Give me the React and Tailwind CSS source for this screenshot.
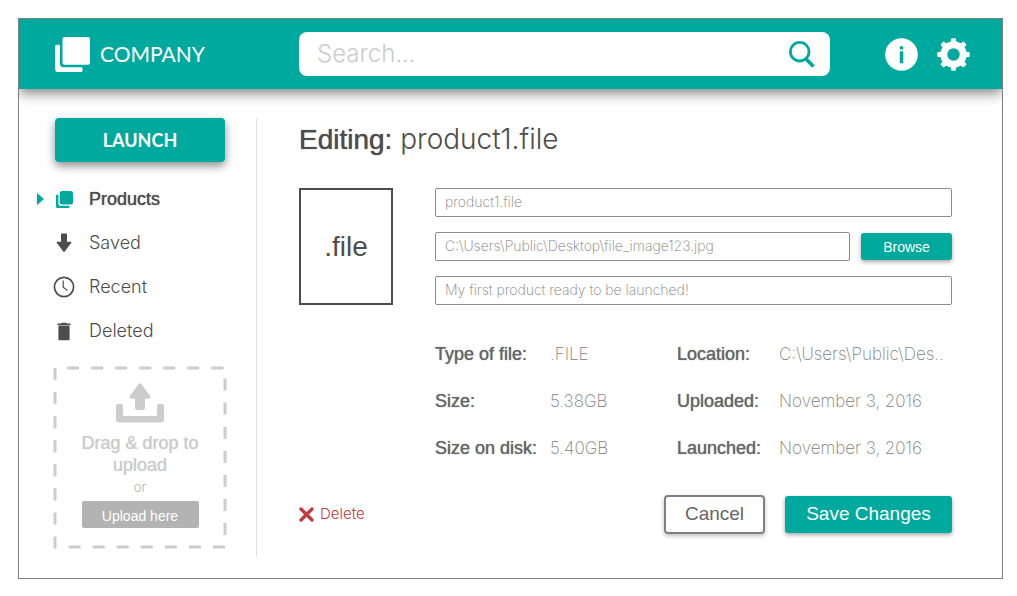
import React from "react";

const sans = "font-['Liberation_Sans',Arial,sans-serif]";
const light = "font-['Inter','Liberation_Sans',sans-serif] font-light";
const thin = "font-['Inter','Liberation_Sans',sans-serif] font-extralight";
const heavy = "[text-shadow:0_0_1px_currentColor]";

function StackIcon({ className, radius = 2 }) {
  return (
    <svg viewBox="0 0 34 34" className={className} fill="currentColor" aria-hidden="true">
      <rect x="7.300" y="0" width="26.700" height="27" rx={radius} />
      <path d="M1.500 7.500H3.500Q4.800 7.500 4.800 8.800V25.500Q4.800 29.300 8.500 29.300H25.500Q26.800 29.300 26.800 30.600V32.300Q26.800 34 25.300 34H3Q0 34 0 31V9Q0 7.500 1.500 7.500Z" />
    </svg>
  );
}

function SearchIcon() {
  return (
    <svg viewBox="0 0 26 27" className="h-[27px] w-[26px]" fill="none" stroke="currentColor" aria-hidden="true">
      <circle cx="10.7" cy="10.7" r="9.300" strokeWidth="2.800" />
      <path d="M16.800 17.800L24.500 25.500" strokeWidth="3.600" />
    </svg>
  );
}

function InfoIcon() {
  return (
    <svg viewBox="0 0 33 33" className="size-[33px]" aria-hidden="true">
      <circle cx="16.500" cy="16.500" r="16.300" fill="#fff" />
      <circle cx="16.500" cy="9.800" r="1.900" fill="#00a99d" />
      <rect x="14.800" y="13.300" width="3.500" height="12" fill="#00a99d" />
    </svg>
  );
}

function GearIcon() {
  return (
    <svg viewBox="0 0 33 33" className="size-[33px]" aria-hidden="true">
      <g fill="#fff">
        <circle cx="16.500" cy="16.500" r="13.200" />
        {[0, 45, 90, 135, 180, 225, 270, 315].map((a) => (
          <path key={a} d="M13 5L14 3.200V1.200Q14 .3 15 .3H18Q19 .3 19 1.200V3.200L20 5Z" transform={`rotate(${a} 16.5 16.5)`} />
        ))}
      </g>
      <circle cx="16.500" cy="16.500" r="6.200" fill="#00a99d" />
    </svg>
  );
}

function DownIcon() {
  return (
    <svg viewBox="0 0 16 20" className="h-5 w-4" fill="currentColor" aria-hidden="true">
      <path d="M5 1Q5 .5 5.500 .5H10.500Q11 .5 11 1V8.700H14.800Q15.900 8.900 15.300 9.800L9 18.300Q8 19.500 7 18.300L.7 9.800Q.1 8.900 1.200 8.700H5Z" />
    </svg>
  );
}

function ClockIcon() {
  return (
    <svg viewBox="0 0 22 22" className="size-[22px]" fill="none" stroke="currentColor" aria-hidden="true">
      <circle cx="11" cy="11" r="9.600" strokeWidth="1.700" />
      <path d="M10.200 4.500V11.200L14.600 14.600" strokeWidth="1.200" />
    </svg>
  );
}

function TrashIcon() {
  return (
    <svg viewBox="0 0 14 19" className="h-[19px] w-3.5" fill="currentColor" aria-hidden="true">
      <path d="M.5 1.600H4.200L4.800 .8H9.200L9.800 1.600H13.500V3H.5Z" />
      <path d="M1.400 3.500H12.600V17Q12.600 18.300 11.300 18.300H2.700Q1.400 18.300 1.400 17Z" />
    </svg>
  );
}

function UploadIcon() {
  return (
    <svg viewBox="0 0 48 40" className="h-10 w-12" fill="#ccc" aria-hidden="true">
      <path d="M22.600 1Q24 -.4 25.400 1L34 12.800Q35 15.300 32.800 15.700H29V25Q29 27 27 27H21Q19 27 19 25V15.700H15.200Q13 15.300 14 12.800Z" />
      <path d="M2 21H5.500Q7 21 7 22.500V33H41V22.500Q41 21 42.500 21H46Q48 21 48 23V36.500Q48 39.500 45 39.500H3Q0 39.500 0 36.500V23Q0 21 2 21Z" />
    </svg>
  );
}

const nav = [
  { label: "Products", icon: <StackIcon radius={5} className="size-[17px] text-[#00a99d]" />, active: true },
  { label: "Saved", icon: <DownIcon /> },
  { label: "Recent", icon: <ClockIcon /> },
  { label: "Deleted", icon: <TrashIcon /> },
];

const details = [
  ["Type of file:", ".FILE", "Location:", "C:\\Users\\Public\\Des.."],
  ["Size:", "5.38GB", "Uploaded:", "November 3, 2016"],
  ["Size on disk:", "5.40GB", "Launched:", "November 3, 2016"],
];

const field = `${thin} h-[29px] w-full min-w-0 rounded-xs border border-[#8c8c8c] bg-white px-[9px] pb-0.5 text-sm text-[#808080] outline-none`;

function Header() {
  return (
    <header className="flex h-[70px] items-center bg-[#00a99d] pl-9 pr-8 text-white shadow-[0_4px_12px_rgba(0,0,0,0.5)]">
      <a href="#" className="flex w-[244px] shrink-0 items-center gap-2.5">
        <StackIcon className="size-[35px]" />
        <span className="font-['Lato',sans-serif] text-[21px]">COMPANY</span>
      </a>
      <form className="flex h-11 min-w-0 flex-1 items-center rounded-lg bg-white pl-[18px] pr-[15px]">
        <input
          type="search"
          aria-label="Search"
          placeholder="Search..."
          className={`${light} min-w-0 flex-1 bg-transparent text-2xl text-[#4d4d4d] outline-none placeholder:text-[#ccc]`}
        />
        <button type="button" aria-label="Search" className="text-[#00a99d]"><SearchIcon /></button>
      </form>
      <div className="ml-[55px] flex gap-[19px]">
        <button type="button" aria-label="Information"><InfoIcon /></button>
        <button type="button" aria-label="Settings"><GearIcon /></button>
      </div>
    </header>
  );
}

function Sidebar() {
  return (
    <aside className="w-[202px] shrink-0 border-r border-[#e0e0e0] pr-[31px] pb-2.5">
      <button type="button" className="h-11 w-full rounded bg-[#00a99d] font-['Lato',sans-serif] text-lg font-bold text-white shadow-[0_4px_10px_rgba(0,0,0,0.45)]">
        LAUNCH
      </button>
      <nav className="mt-[15px] -ml-[18px]">
        {nav.map((n) => (
          <a key={n.label} href="#" className="flex h-11 items-center text-lg text-[#4d4d4d]">
            <span className="w-4">
              {n.active && (
                <svg viewBox="0 0 7 12" className="h-3 w-[7px] text-[#00a99d] drop-shadow-sm" fill="currentColor" aria-hidden="true">
                  <path d="M0 0L7 6L0 12Z" />
                </svg>
              )}
            </span>
            <span className="flex w-[22px] justify-center">{n.icon}</span>
            <span className={n.active ? `ml-3.5 ${heavy}` : `ml-3.5 ${light}`}>{n.label}</span>
          </a>
        ))}
      </nav>
      <div className="relative mt-[15px] flex h-[179px] flex-col items-center pt-[15px] text-[#ccc]">
        <svg className="pointer-events-none absolute inset-0 size-full overflow-visible" aria-hidden="true">
          <rect width="100%" height="100%" fill="none" stroke="#ccc" strokeWidth="3" pathLength="696" strokeDasharray="12 12" strokeDashoffset="12" />
        </svg>
        <UploadIcon />
        <p className={`mt-[9px] w-[130px] text-center text-lg leading-[22px] ${heavy}`}>Drag &amp; drop to upload</p>
        <p className={`${light} text-[13px] leading-[22px] text-[#b3b3b3]`}>or</p>
        <button type="button" className="mt-[3px] h-[27px] w-[117px] rounded-xs bg-[#b3b3b3] pt-0.5 text-sm text-white">Upload here</button>
      </div>
    </aside>
  );
}

function Editor() {
  return (
    <main className="min-w-0 flex-1 pl-[42px]">
      <h1 className="text-[28px] leading-[42px] text-[#4d4d4d]">
        <span className={heavy}>Editing:</span> <span className={light}>product1.file</span>
      </h1>
      <form className="mt-[27px]">
        <div className="flex gap-[42px]">
          <div className="flex w-[94px] shrink-0 items-center justify-center border-2 border-[#4d4d4d] text-[28px] text-[#4d4d4d]">.file</div>
          <div className="flex min-w-0 flex-1 flex-col gap-[15px]">
            <input aria-label="File name" defaultValue="product1.file" className={field} />
            <div className="flex items-center gap-[11px]">
              <input aria-label="Image path" defaultValue={"C:\\Users\\Public\\Desktop\\file_image123.jpg"} className={field} />
              <button type="button" className="h-[27px] w-[91px] shrink-0 rounded-[3px] bg-[#00a99d] text-sm text-white shadow-[0_2px_4px_rgba(0,0,0,0.35)]">Browse</button>
            </div>
            <input aria-label="Description" defaultValue="My first product ready to be launched!" className={field} />
          </div>
        </div>
        <dl className="mt-[26px] ml-[136px] grid grid-cols-[115px_1fr_102px_173px] text-lg leading-[47px] whitespace-nowrap">
          {details.map((row) =>
            row.map((t, i) =>
              i % 2 ? (
                <dd key={row[0] + i} className={`${thin} text-[17px] text-[#808080]`}>{t}</dd>
              ) : (
                <dt key={row[0] + i} className={`text-[#666] ${heavy}`}>{t}</dt>
              )
            )
          )}
        </dl>
        <div className="mt-[23px] flex items-center">
          <button type="button" className={`${light} flex items-center gap-1.5 text-[15px] text-[#c13b3f]`}>
            <svg viewBox="0 0 15 15" className="size-[15px]" fill="none" stroke="#c13b3f" strokeWidth="3.400" strokeLinecap="round" aria-hidden="true">
              <path d="M2 2L13 13M13 2L2 13" />
            </svg>
            Delete
          </button>
          <button type="button" className="ml-auto h-[39px] w-[101px] rounded border-2 border-[#808080] text-[19px] text-[#666] shadow-[0_2px_4px_rgba(0,0,0,0.25)]">Cancel</button>
          <button type="button" className="ml-5 h-[37px] w-[167px] rounded-[3px] bg-[#00a99d] text-[19px] text-white shadow-[0_2px_4px_rgba(0,0,0,0.35)]">Save Changes</button>
        </div>
      </form>
    </main>
  );
}

export default function App() {
  return (
    <div className={`${sans} min-h-screen bg-white pt-[18px] pr-3.5 pb-[17px] pl-[18px]`}>
      <div className="overflow-hidden border border-[#808080]">
        <Header />
        <div className="flex pt-[29px] pr-[50px] pb-[21px] pl-9">
          <Sidebar />
          <Editor />
        </div>
      </div>
    </div>
  );
}
